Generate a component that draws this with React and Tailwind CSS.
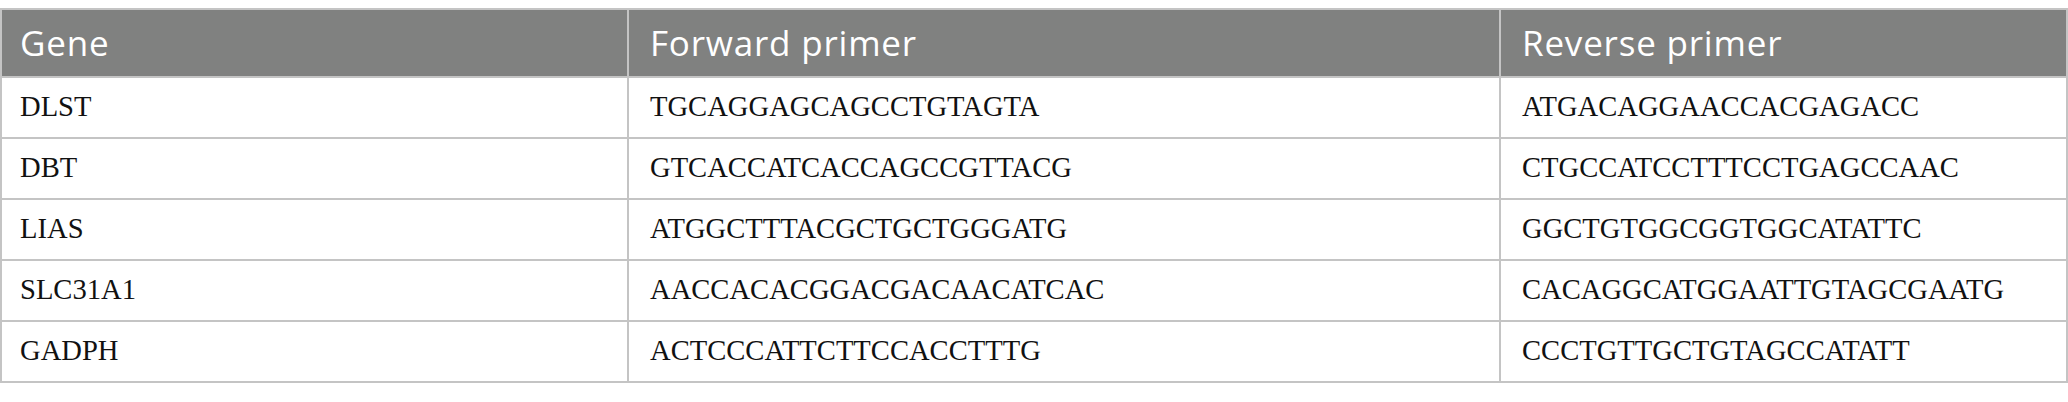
export default function App() {
  const rows = [
    ["DLST", "TGCAGGAGCAGCCTGTAGTA", "ATGACAGGAACCACGAGACC"],
    ["DBT", "GTCACCATCACCAGCCGTTACG", "CTGCCATCCTTTCCTGAGCCAAC"],
    ["LIAS", "ATGGCTTTACGCTGCTGGGATG", "GGCTGTGGCGGTGGCATATTC"],
    ["SLC31A1", "AACCACACGGACGACAACATCAC", "CACAGGCATGGAATTGTAGCGAATG"],
    ["GADPH", "ACTCCCATTCTTCCACCTTTG", "CCCTGTTGCTGTAGCCATATT"],
  ];
  const th =
    "border-2 border-[#c4c4c4] text-left font-normal text-white text-[35px] tracking-[0.8px] font-['Open_Sans',sans-serif] align-middle";
  const td =
    "border-2 border-[#c4c4c4] text-left text-[28.6px] text-[#111] font-['Liberation_Serif',serif] align-middle h-[61px]";
  const pad = (i) => (i === 0 ? "pl-[18px]" : "pl-[21px]");
  return (
    <div className="w-[2068px] h-[402px] bg-white pt-2">
      <table className="w-[2068px] border-collapse table-fixed">
        <colgroup>
          <col className="w-[627px]" />
          <col className="w-[872px]" />
          <col />
        </colgroup>
        <thead>
          <tr className="bg-[#808180] h-[68px]">
            {["Gene", "Forward primer", "Reverse primer"].map((h, i) => (
              <th key={h} className={`${th} ${pad(i)}`}>
                {h}
              </th>
            ))}
          </tr>
        </thead>
        <tbody>
          {rows.map((r) => (
            <tr key={r[0]}>
              {r.map((c, i) => (
                <td key={i} className={`${td} ${pad(i)}`}>
                  {c}
                </td>
              ))}
            </tr>
          ))}
        </tbody>
      </table>
    </div>
  );
}
